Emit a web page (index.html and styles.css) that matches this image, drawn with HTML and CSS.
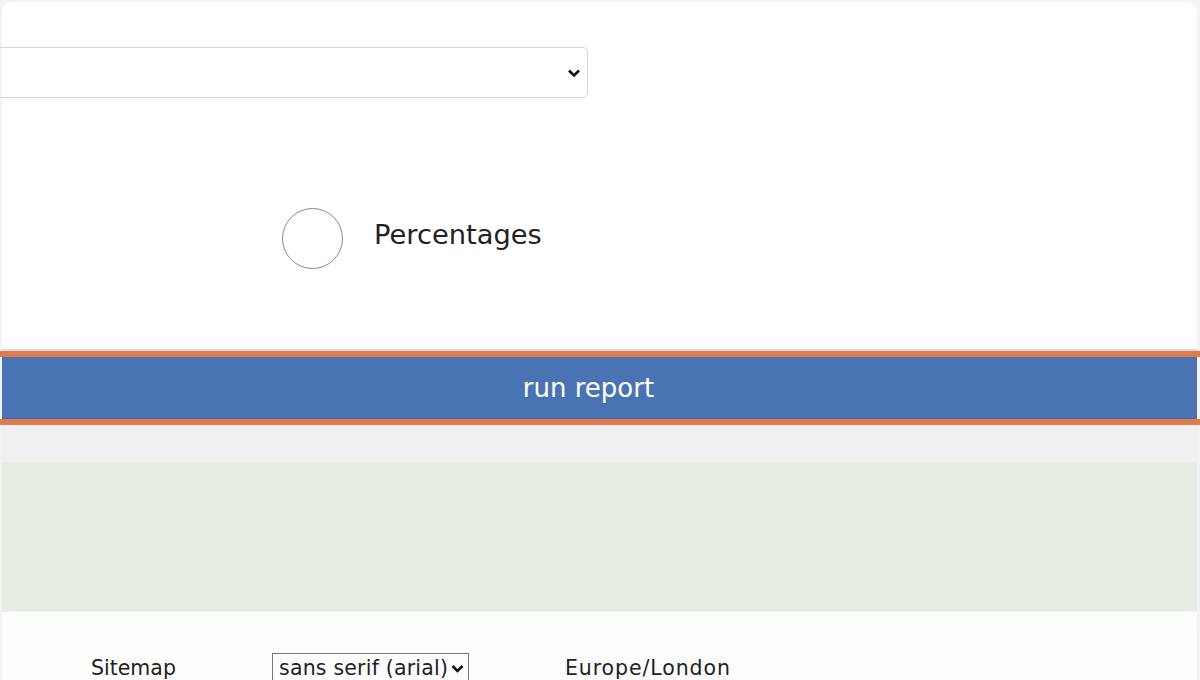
FILE: index.html
```html
<!DOCTYPE html>
<html>
<head>
<meta charset="utf-8">
<link rel="stylesheet" href="styles.css">
</head>
<body>
<div class="frame">
  <div class="card">
    <div class="select-row">
      <div class="select-box">
        <svg class="chev" width="14" height="10" viewBox="0 0 14 10"><path d="M2 2.5 L7 7.5 L12 2.5" fill="none" stroke="#111" stroke-width="2.6"/></svg>
      </div>
    </div>
    <div class="radio-row">
      <span class="radio"></span>
      <span class="radio-label">Percentages</span>
    </div>
  </div>
  <div class="run-wrap">
    <div class="run-btn">run report</div>
  </div>
  <div class="gap"></div>
  <div class="green"></div>
  <div class="footer">
    <span class="foot-link">Sitemap</span>
    <span class="font-select"><span class="fs-text">sans serif (arial)</span><svg class="chev-sm" width="13" height="9" viewBox="0 0 13 9"><path d="M1.5 2 L6.5 7 L11.5 2" fill="none" stroke="#111" stroke-width="2.6"/></svg></span>
    <span class="tz">Europe/London</span>
  </div>
</div>
</body>
</html>
```

FILE: styles.css
```css
html, body {
  margin: 0;
  padding: 0;
  height: 680px;
  overflow: hidden;
  background: #f3f3f7;
  font-family: "DejaVu Sans", "Noto Sans", sans-serif;
}
.frame {
  padding-top: 2px;
  height: 678px;
}
.card {
  margin: 0 3px 0 2px;
  background: #fff;
  border-radius: 10px 10px 0 0;
  height: 347px;
  border-bottom: 2px solid #dcdcd4;
  box-sizing: content-box;
}
.select-row {
  padding-top: 45px;
}
.select-box {
  margin-left: -10px;
  width: 594px;
  height: 49px;
  border: 1px solid #d6d6d6;
  border-radius: 5px;
  box-sizing: content-box;
  display: flex;
  align-items: center;
  justify-content: flex-end;
}
.chev {
  margin-right: 6px;
}
.radio-row {
  display: flex;
  align-items: center;
  padding-top: 110px;
  padding-left: 280px;
}
.radio {
  width: 59px;
  height: 59px;
  border: 1px solid #8a8a8a;
  border-radius: 50%;
}
.radio-label {
  margin-left: 31px;
  font-size: 27.3px;
  color: #222;
  margin-top: -9px;
}
.run-wrap {
  border-top: 6px solid #e07b50;
  border-bottom: 6px solid #e07b50;
}
.run-btn {
  margin: 0 3px 0 2px;
  height: 61px;
  padding-right: 22px;
  border-bottom: 1px solid #3d68b0;
  background: #4a73b3;
  color: #fff;
  font-size: 26px;
  display: flex;
  align-items: center;
  justify-content: center;
}
.gap {
  margin: 0 3px 0 2px;
  height: 37px;
  background: #f0f0f0;
}
.green {
  margin: 0 3px 0 2px;
  height: 149px;
  background: #e6eee3;
  border-bottom: 1px solid #eef0ee;
}
.footer {
  margin: 0 3px 0 2px;
  height: 70px;
  background: #fdfdfd;
  display: flex;
  align-items: flex-end;
  padding-left: 89px;
  font-size: 20.5px;
  color: #222;
}
.foot-link {
  width: 181px;
  line-height: 28px;
}
.font-select {
  display: inline-flex;
  align-items: center;
  gap: 3px;
  height: 28px;
  border: 1px solid #767676;
  border-bottom: none;
  padding: 0 3px 0 6px;
  width: 186px;
  box-sizing: content-box;
  line-height: 28px;
  overflow: hidden;
}
.fs-text {
  white-space: nowrap;
  letter-spacing: 0.2px;
}
.tz {
  margin-left: 96px;
  line-height: 28px;
  letter-spacing: 0.9px;
}
```
